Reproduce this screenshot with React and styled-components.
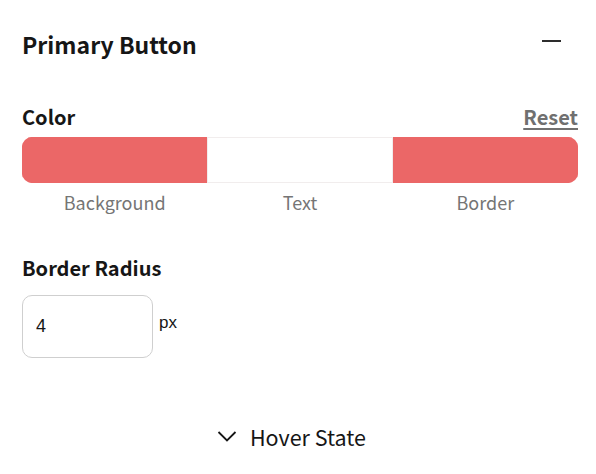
import React from 'react';
import styled, { createGlobalStyle } from 'styled-components';

const GlobalStyle = createGlobalStyle`
    body {
        margin: 0;
        background: #ffffff;
        font-family: "Noto Sans CJK JP", "Noto Sans", sans-serif;
        color: #161616;
    }
`;

const Panel = styled.div`
    width: 596px;
    height: 474px;
    box-sizing: border-box;
    padding: 26px 18px 0 22px;
    display: flex;
    flex-direction: column;
`;

const Header = styled.div`
    display: flex;
    align-items: center;
    justify-content: space-between;
    height: 36px;
`;

const Title = styled.h2`
    margin: 0;
    font-size: 23px;
    font-weight: 700;
`;

const CollapseButton = styled.button`
    border: none;
    background: none;
    padding: 0;
    margin-right: 17px;
    width: 20px;
    height: 20px;
    display: flex;
    align-items: center;
    justify-content: center;
    cursor: pointer;
`;

const Section = styled.div`
    margin-top: ${(p) => p.$top}px;
    display: flex;
    flex-direction: column;
`;

const LabelRow = styled.div`
    display: flex;
    align-items: center;
    justify-content: space-between;
    height: 26px;
`;

const Label = styled.span`
    font-size: 20px;
    font-weight: 700;
`;

const ResetLink = styled.a`
    font-size: 20px;
    font-weight: 700;
    color: #707070;
    text-decoration: underline;
    text-underline-offset: 3px;
    cursor: pointer;
`;

const Swatches = styled.div`
    margin-top: 8px;
    display: grid;
    grid-template-columns: repeat(3, 1fr);
    height: 46px;
    border-radius: 10px;
    overflow: hidden;
`;

const Swatch = styled.div`
    box-sizing: border-box;
    background: ${(p) => p.$color};
    border: 1px solid ${(p) => (p.$color === '#ffffff' ? '#f1eded' : p.$color)};
`;

const SwatchLabels = styled.div`
    display: grid;
    grid-template-columns: repeat(3, 1fr);
    margin-top: 6px;
`;

const SwatchLabel = styled.span`
    text-align: center;
    font-size: 18px;
    color: #757575;
`;

const InputRow = styled.div`
    margin-top: 15px;
    display: flex;
    align-items: flex-start;
    gap: 6px;
`;

const NumberInput = styled.input`
    width: 131px;
    height: 63px;
    box-sizing: border-box;
    border: 1px solid #cfcfcf;
    border-radius: 10px;
    padding: 0 13px;
    font-family: "Liberation Sans", Arial, sans-serif;
    font-size: 18px;
    color: #161616;
    outline: none;
`;

const Unit = styled.span`
    margin-top: 18px;
    font-family: "Liberation Sans", Arial, sans-serif;
    font-size: 17px;
`;

const HoverToggle = styled.button`
    margin-top: auto;
    margin-bottom: 22px;
    align-self: center;
    margin-left: -17px;
    display: flex;
    align-items: center;
    gap: 13px;
    border: none;
    background: none;
    padding: 0;
    font-family: "Noto Sans CJK JP", "Noto Sans", sans-serif;
    font-size: 21.5px;
    color: #161616;
    cursor: pointer;
`;

const swatches = [
    { name: 'Background', color: '#eb6767' },
    { name: 'Text', color: '#ffffff' },
    { name: 'Border', color: '#eb6767' },
];

export default function App() {
    return (
        <>
            <GlobalStyle />
            <Panel>
                <Header>
                    <Title>Primary Button</Title>
                    <CollapseButton aria-label="Collapse">
                        <svg width="20" height="20" viewBox="0 0 20 20">
                            <line x1="1" y1="7" x2="20" y2="7" stroke="#161616" strokeWidth="1.8" />
                        </svg>
                    </CollapseButton>
                </Header>

                <Section $top={41}>
                    <LabelRow>
                        <Label>Color</Label>
                        <ResetLink>Reset</ResetLink>
                    </LabelRow>
                    <Swatches>
                        {swatches.map((s) => (
                            <Swatch key={s.name} $color={s.color} />
                        ))}
                    </Swatches>
                    <SwatchLabels>
                        {swatches.map((s) => (
                            <SwatchLabel key={s.name}>{s.name}</SwatchLabel>
                        ))}
                    </SwatchLabels>
                </Section>

                <Section $top={39}>
                    <LabelRow>
                        <Label>Border Radius</Label>
                    </LabelRow>
                    <InputRow>
                        <NumberInput type="text" defaultValue="4" />
                        <Unit>px</Unit>
                    </InputRow>
                </Section>

                <HoverToggle>
                    <svg width="20" height="14" viewBox="0 0 20 14">
                        <polyline points="1.5,2 10,10.5 18.5,2" fill="none" stroke="#161616" strokeWidth="1.8" />
                    </svg>
                    Hover State
                </HoverToggle>
            </Panel>
        </>
    );
}
